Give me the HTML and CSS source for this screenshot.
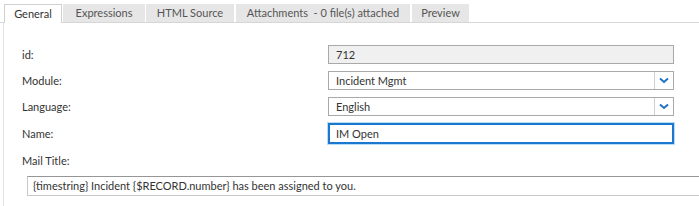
FILE: index.html
```html
<!DOCTYPE html>
<html>
<head>
<meta charset="utf-8">
<link rel="stylesheet" href="styles.css">
</head>
<body>
<div class="tabs">
  <div class="tab active t1">General</div>
  <div class="tab t2">Expressions</div>
  <div class="tab t3">HTML Source</div>
  <div class="tab t4">Attachments &nbsp;- 0 file(s) attached</div>
  <div class="tab t5">Preview</div>
</div>
<div class="panel">
  <div class="row">
    <div class="label">id:</div>
    <div class="field readonly">712</div>
  </div>
  <div class="row">
    <div class="label">Module:</div>
    <div class="field select"><span class="val">Incident Mgmt</span><span class="arrow"><svg width="10" height="7" viewBox="0 0 10 7"><path d="M1 1.5 L5 5 L9 1.5" fill="none" stroke="#1f72c4" stroke-width="2"/></svg></span></div>
  </div>
  <div class="row">
    <div class="label">Language:</div>
    <div class="field select"><span class="val">English</span><span class="arrow"><svg width="10" height="7" viewBox="0 0 10 7"><path d="M1 1.5 L5 5 L9 1.5" fill="none" stroke="#1f72c4" stroke-width="2"/></svg></span></div>
  </div>
  <div class="row name-row">
    <div class="label">Name:</div>
    <div class="field focus">IM Open</div>
  </div>
  <div class="row title-row">
    <div class="label">Mail Title:</div>
  </div>
  <div class="mail">{timestring} Incident {$RECORD.number} has been assigned to you.</div>
</div>
</body>
</html>
```
FILE: styles.css
```css
html, body {
  margin: 0;
  padding: 0;
  background: #ffffff;
  overflow: hidden;
}
body {
  font-family: "Lato", "Open Sans", "Liberation Sans", sans-serif;
  font-size: 11px;
  color: #333333;
  width: 699px;
  height: 206px;
}
.tabs {
  display: flex;
  padding: 4px 0 0 4px;
  height: 18px;
  border-bottom: 1px solid #d6d6d6;
  gap: 1px;
}
.tab {
  height: 18px;
  line-height: 18px;
  background: #e6e6e6;
  color: #555555;
  text-align: center;
  box-sizing: border-box;
}
.tab.active {
  background: #ffffff;
  border: 1px solid #d0d0d0;
  border-bottom: none;
  height: 19px;
  color: #333333;
}
.t1 { width: 58px; }
.t2 { width: 82px; }
.t3 { width: 88px; }
.t4 { width: 174px; margin-left: 1px; }
.t5 { width: 57px; margin-left: 1px; }
.panel {
  margin-left: 3px;
  border-left: 1px solid #e4e4e4;
  padding: 22px 0 0 18px;
  height: 183px;
  box-sizing: border-box;
}
.row {
  display: flex;
  align-items: center;
  height: 19px;
  margin-bottom: 7px;
}
.label {
  width: 306px;
  flex: none;
}
.field {
  width: 346px;
  height: 19px;
  box-sizing: border-box;
  border: 1px solid #a9a9a9;
  padding-left: 7px;
  line-height: 17px;
  color: #333333;
}
.readonly {
  background: #f0f0f0;
}
.select {
  display: flex;
  padding-right: 0;
}
.select .val {
  flex: 1;
}
.arrow {
  width: 18px;
  border-left: 1px solid #cfcfcf;
  display: flex;
  align-items: center;
  justify-content: center;
}
.name-row {
  height: 21px;
}
.focus {
  height: 21px;
  border: 2px solid #1a78cf;
  box-shadow: 0 0 0 1px #b7ddf7;
  padding-left: 6px;
  line-height: 17px;
}
.title-row {
  margin-top: 0;
  margin-bottom: 6px;
}
.mail {
  margin-left: 5px;
  height: 20px;
  box-sizing: border-box;
  border: 1px solid #c8c8c8;
  border-top-color: #969696;
  border-right: none;
  padding-left: 5px;
  line-height: 18px;
}
```
